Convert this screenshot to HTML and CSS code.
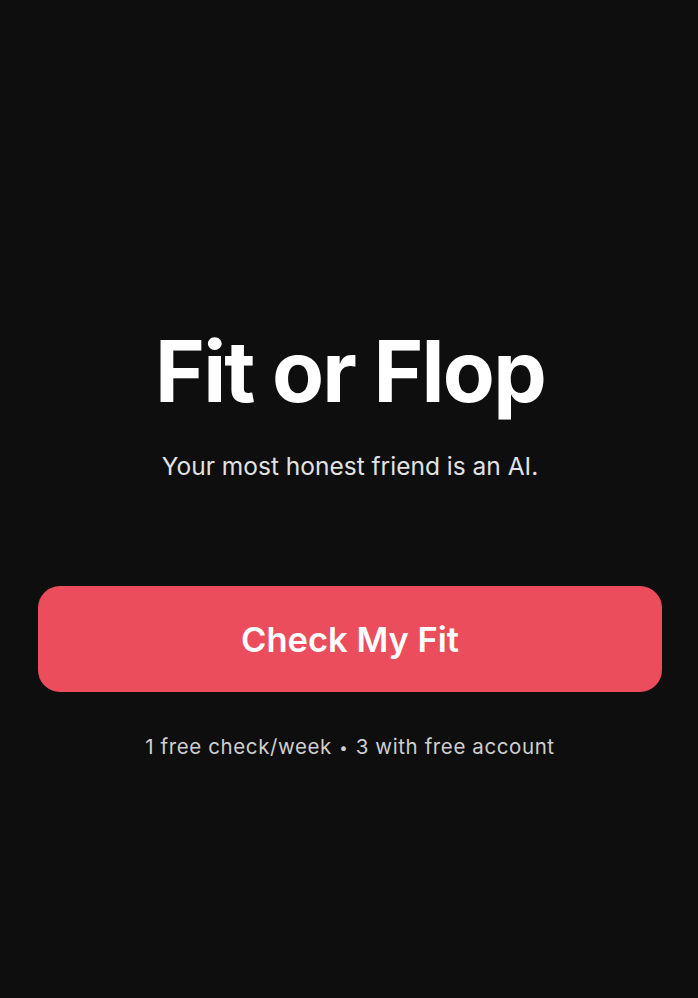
FILE: index.html
```html
<!DOCTYPE html>
<html>
<head>
<meta charset="utf-8">
<link rel="stylesheet" href="styles.css">
</head>
<body>
<main class="screen">
  <h1 class="title">Fit or Flop</h1>
  <p class="tagline">Your most honest friend is an AI.</p>
  <button class="cta">Check My Fit</button>
  <p class="note">1 free check/week <span class="dot">•</span> 3 with free account</p>
</main>
</body>
</html>
```
FILE: styles.css
```css
html, body {
  margin: 0;
  padding: 0;
  background: #0e0e0e;
  height: 100%;
}
body {
  font-family: Inter, "Noto Sans", sans-serif;
  color: #fff;
}
.screen {
  display: flex;
  flex-direction: column;
  align-items: center;
  padding: 329px 36px 0 38px;
}
.title {
  margin: 0;
  font-size: 85px;
  line-height: 85px;
  font-weight: 700;
  letter-spacing: -1.8px;
  color: #fff;
}
.tagline {
  margin: 37px 0 0;
  font-size: 24.5px;
  line-height: 30px;
  letter-spacing: 0;
  color: #e2e2e2;
}
.cta {
  margin-top: 105px;
  width: 100%;
  height: 106px;
  border: none;
  border-radius: 22px;
  background: #eb4d5c;
  color: #fff;
  font-family: Inter, "Noto Sans", sans-serif;
  font-size: 34.5px;
  font-weight: 600;
  letter-spacing: 0;
}
.note {
  margin: 42px 0 0;
  font-size: 20.5px;
  line-height: 26px;
  letter-spacing: 0.6px;
  color: #cfcfcf;
}
.dot {
  font-size: 15px;
  vertical-align: 1px;
  padding: 0 1px;
}
```
